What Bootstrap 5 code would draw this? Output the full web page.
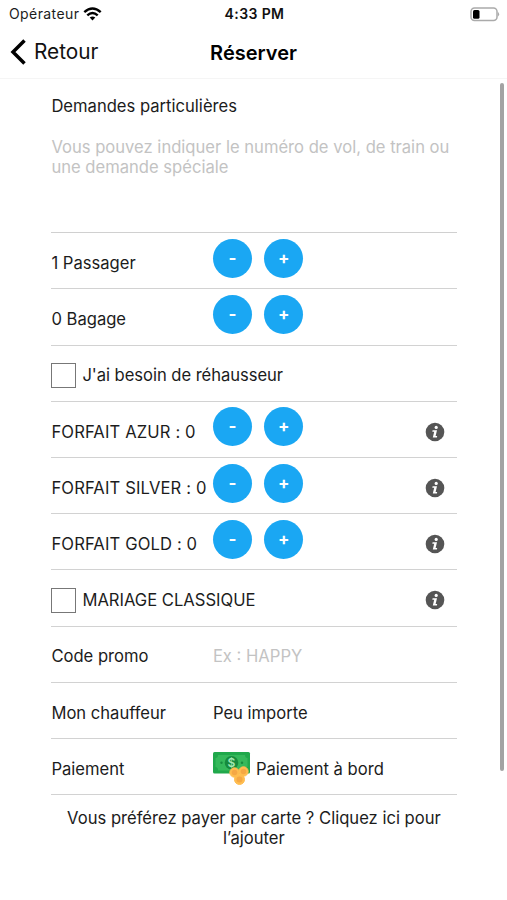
<!DOCTYPE html>
<html lang="fr">
<head>
<meta charset="utf-8">
<meta name="viewport" content="width=device-width, initial-scale=1">
<title>Réserver</title>
<link href="https://cdn.jsdelivr.net/npm/bootstrap@5.3.0/dist/css/bootstrap.min.css" rel="stylesheet">
<style>
body{font-family:Inter,"Liberation Sans",sans-serif;font-size:16.6px;line-height:20.5px;color:#1c1c1c;background:#fff;height:900px;overflow:hidden}
.status-bar{height:27px;font-size:14px;padding:1px 7px 0 9px}
.operator{letter-spacing:.4px}
.status-time{font-weight:600;color:#111;font-size:14px;letter-spacing:.4px}
.title-bar{height:52px;border-bottom:1px solid #f5f5f5;padding:0 10px}
.back-link{font-size:20.8px;color:#111;gap:8px;padding-top:3px}
.page-title{font-size:20px;font-weight:600;color:#000;padding-top:1px}
.side{flex:1 1 0}
.form-body{padding:0 50.5px 0 51.4px}
.notes-field{height:154.2px;padding-top:17px;border-bottom:1px solid #d0d0d0}
.hint{color:#c3c3c3}
.notes-field .hint{margin-top:20px}
.field{height:56.2px;border-bottom:1px solid #d2d2d2;padding-top:5px}
.field-label{width:161.5px;white-space:nowrap}
.plan{letter-spacing:.13px}
.caps{letter-spacing:-.05px}
.round-btn{width:39px;height:39px;background:#1aa7f3;color:#fff;font-weight:700;font-size:17px;margin-top:-10px;margin-right:12.5px;padding:0;line-height:39px}
.tick{width:25px;height:25px;border:1.5px solid #777;margin-right:6px}
.info{margin-right:12px}
.card-link-text{padding-top:12.5px}
.scroll-thumb{right:3px;top:83px;width:4px;height:688px;background:#a3a3a3;border-radius:2px}
</style>
<script src="https://cdn.jsdelivr.net/npm/bootstrap@5.3.0/dist/js/bootstrap.bundle.min.js"></script>
</head>
<body>
<svg width="0" height="0" class="position-absolute" aria-hidden="true">
  <symbol id="info" viewBox="0 0 20 20"><circle cx="10" cy="10" r="9.3" fill="#555"/><circle cx="11.2" cy="5.4" r="1.6" fill="#fff"/><path d="M7.6 8.2H12L10.6 13.9H12.2L11.900 15.4H7.8L9.2 9.7H7.3Z" fill="#fff"/></symbol>
</svg>
<header>
  <div class="status-bar d-flex align-items-center">
    <div class="side d-flex align-items-center"><span class="operator">Opérateur</span>
      <svg width="19" height="14" viewBox="0 0 19 14" class="ms-1" fill="none" stroke="#000" stroke-width="2.4"><path d="M1.3 5.2Q9.5-2.4 17.7 5.2M4.3 8.4Q9.5 3.6 14.7 8.4"/><path d="M6.7 10.6Q9.5 8.2 12.3 10.6L9.5 13.5Z" fill="#000" stroke="none"/></svg>
    </div>
    <div class="status-time">4:33 PM</div>
    <div class="side d-flex justify-content-end">
      <svg width="31" height="15" viewBox="0 0 31 15"><rect x="2" y="1" width="26" height="12.6" rx="3.5" fill="#fff" stroke="#aaa" stroke-width="1.5"/><rect x="4" y="3" width="6.5" height="8.8" rx="1.5"/><path d="M28.800 4.8Q31.500 7.3 28.800 9.8Z" fill="#aaa"/></svg>
    </div>
  </div>
  <nav class="title-bar d-flex align-items-center">
    <div class="side"><a class="back-link d-inline-flex align-items-center text-decoration-none" href="#"><svg width="16" height="26" viewBox="0 0 16 26" fill="none" stroke="#000" stroke-width="3.5"><path d="M14.5 1.5L3 13L14.5 24.5"/></svg><span>Retour</span></a></div>
    <div class="page-title">Réserver</div>
    <div class="side"></div>
  </nav>
</header>
<main class="form-body">
  <section class="notes-field"><div>Demandes particulières</div><div class="hint">Vous pouvez indiquer le numéro de vol, de train ou une demande spéciale</div></section>
  <div class="field d-flex align-items-center"><span class="field-label">1 Passager</span><button class="round-btn btn rounded-circle border-0">-</button><button class="round-btn btn rounded-circle border-0">+</button></div>
  <div class="field d-flex align-items-center"><span class="field-label">0 Bagage</span><button class="round-btn btn rounded-circle border-0">-</button><button class="round-btn btn rounded-circle border-0">+</button></div>
  <div class="field d-flex align-items-center"><span class="tick"></span><span class="caps">J'ai besoin de réhausseur</span></div>
  <div class="field d-flex align-items-center"><span class="field-label plan">FORFAIT AZUR : 0</span><button class="round-btn btn rounded-circle border-0">-</button><button class="round-btn btn rounded-circle border-0">+</button><svg class="info ms-auto" width="20" height="20"><use href="#info"/></svg></div>
  <div class="field d-flex align-items-center"><span class="field-label plan">FORFAIT SILVER : 0</span><button class="round-btn btn rounded-circle border-0">-</button><button class="round-btn btn rounded-circle border-0">+</button><svg class="info ms-auto" width="20" height="20"><use href="#info"/></svg></div>
  <div class="field d-flex align-items-center"><span class="field-label plan">FORFAIT GOLD : 0</span><button class="round-btn btn rounded-circle border-0">-</button><button class="round-btn btn rounded-circle border-0">+</button><svg class="info ms-auto" width="20" height="20"><use href="#info"/></svg></div>
  <div class="field d-flex align-items-center"><span class="tick"></span><span>MARIAGE CLASSIQUE</span><svg class="info ms-auto" width="20" height="20"><use href="#info"/></svg></div>
  <div class="field d-flex align-items-center"><span class="field-label">Code promo</span><span class="hint">Ex : HAPPY</span></div>
  <div class="field d-flex align-items-center"><span class="field-label">Mon chauffeur</span><span>Peu importe</span></div>
  <div class="field d-flex align-items-center"><span class="field-label">Paiement</span>
    <svg width="39" height="34" viewBox="0 0 39 34" class="me-1"><rect x="0" y="0" width="37" height="21.5" rx="1.5" fill="#20a84b"/><path d="M5 3H32Q32 6 34.500 6V15Q32 15 32 18.500H5Q5 15 2.500 15V6Q5 6 5 3Z" fill="#35b95b"/><circle cx="18.500" cy="10.700" r="6.800" fill="#168b3e"/><circle cx="8.500" cy="10.700" r="1.200" fill="#168b3e"/><circle cx="29" cy="10.700" r="1.200" fill="#168b3e"/><text x="18.500" y="15" text-anchor="middle" font-size="12" font-weight="600" fill="#a3e8b5">$</text><g fill="#ffbd4f" stroke="#ffbd4f"><circle cx="21.500" cy="20.500" r="4.700"/><circle cx="30.500" cy="19.500" r="4.700"/><circle cx="26.500" cy="27.500" r="5"/></g><g fill="#f5a844"><circle cx="21.500" cy="20.500" r="2.800"/><circle cx="30.500" cy="19.500" r="2.800"/><circle cx="26.500" cy="27.500" r="3"/></g></svg>
    <span>Paiement à bord</span></div>
  <div class="card-link-text text-center">Vous préférez payer par carte ? Cliquez ici pour l’ajouter</div>
</main>
<div class="scroll-thumb position-absolute"></div>
</body>
</html>
